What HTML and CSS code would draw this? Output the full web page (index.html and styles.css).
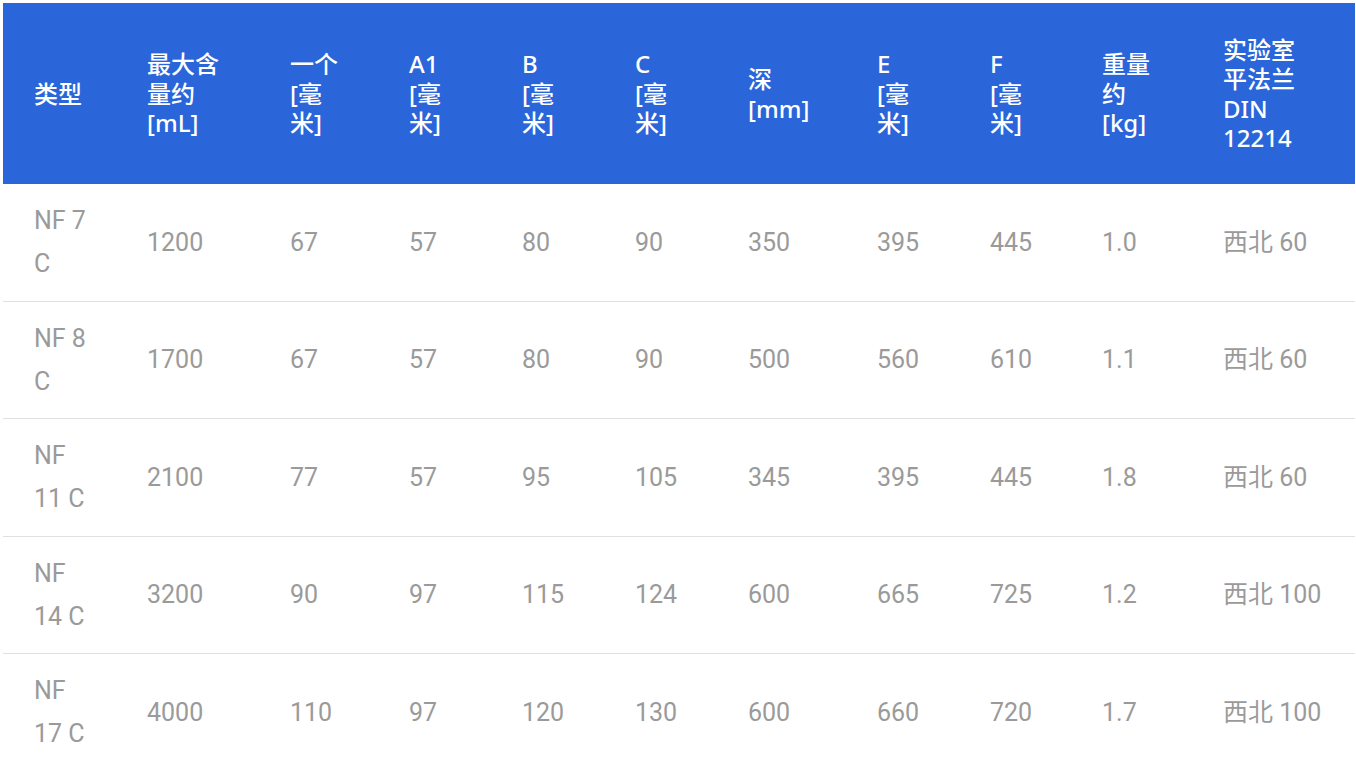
FILE: index.html
```html
<!DOCTYPE html>
<html lang="zh">
<head>
<meta charset="utf-8">
<title>规格表</title>
<link rel="stylesheet" href="styles.css">
</head>
<body>
<div class="wrap">
<table class="spec">
  <colgroup>
    <col class="c1"><col class="c2"><col class="c3"><col class="c4"><col class="c5"><col class="c6"><col class="c7"><col class="c8"><col class="c9"><col class="c10"><col class="c11">
  </colgroup>
  <thead>
    <tr>
      <th>类型</th>
      <th>最大含<br>量约<br>[mL]</th>
      <th>一个<br>[毫<br>米]</th>
      <th>A1<br>[毫<br>米]</th>
      <th>B<br>[毫<br>米]</th>
      <th>C<br>[毫<br>米]</th>
      <th>深<br>[mm]</th>
      <th>E<br>[毫<br>米]</th>
      <th>F<br>[毫<br>米]</th>
      <th>重量<br>约<br>[kg]</th>
      <th>实验室<br>平法兰<br>DIN<br>12214</th>
    </tr>
  </thead>
  <tbody>
    <tr><td>NF 7<br>C</td><td>1200</td><td>67</td><td>57</td><td>80</td><td>90</td><td>350</td><td>395</td><td>445</td><td>1.0</td><td>西北 60</td></tr>
    <tr><td>NF 8<br>C</td><td>1700</td><td>67</td><td>57</td><td>80</td><td>90</td><td>500</td><td>560</td><td>610</td><td>1.1</td><td>西北 60</td></tr>
    <tr><td>NF<br>11 C</td><td>2100</td><td>77</td><td>57</td><td>95</td><td>105</td><td>345</td><td>395</td><td>445</td><td>1.8</td><td>西北 60</td></tr>
    <tr><td>NF<br>14 C</td><td>3200</td><td>90</td><td>97</td><td>115</td><td>124</td><td>600</td><td>665</td><td>725</td><td>1.2</td><td>西北 100</td></tr>
    <tr><td>NF<br>17 C</td><td>4000</td><td>110</td><td>97</td><td>120</td><td>130</td><td>600</td><td>660</td><td>720</td><td>1.7</td><td>西北 100</td></tr>
  </tbody>
</table>
</div>
</body>
</html>
```
FILE: styles.css
```css
html {
  overflow: hidden;
}
body {
  margin: 3px 1px 0 3px;
  background: #ffffff;
}
.wrap {
  border-right: 1px solid #ececec;
  width: 1352px;
}
.spec {
  border-collapse: collapse;
  table-layout: fixed;
  width: 1352px;
}
.c1 { width: 113px; }
.c2 { width: 143px; }
.c3 { width: 119px; }
.c4 { width: 113px; }
.c5 { width: 113px; }
.c6 { width: 113px; }
.c7 { width: 129px; }
.c8 { width: 113px; }
.c9 { width: 112px; }
.c10 { width: 121px; }
.c11 { width: 163px; }

.spec th {
  background: #2a65da;
  color: #ffffff;
  font-family: "Noto Sans", "Noto Sans CJK SC", sans-serif;
  font-weight: 500;
  font-size: 24px;
  line-height: 29.5px;
  text-align: left;
  vertical-align: middle;
  height: 181px;
  padding: 0 4px 0 31px;
  box-sizing: border-box;
  white-space: nowrap;
  letter-spacing: 0;
}
.spec td {
  font-family: Roboto, "Noto Sans CJK SC", sans-serif;
  font-size: 25px;
  line-height: 43px;
  color: #9a9a9a;
  text-align: left;
  vertical-align: middle;
  padding: 15px 4px 15.5px 31px;
  border-bottom: 1px solid #e0e0e0;
  white-space: nowrap;
}
```
